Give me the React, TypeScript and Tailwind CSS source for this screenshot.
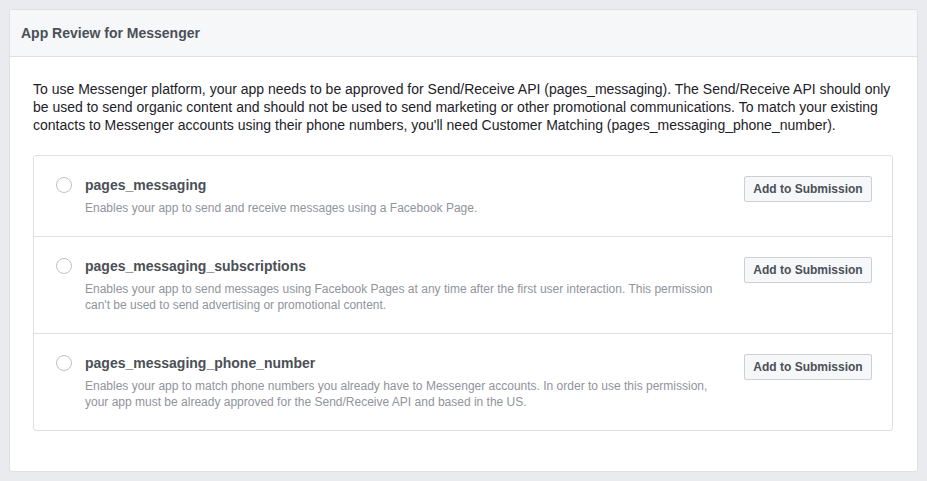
import React from 'react';

interface Permission {
  name: string;
  description: string;
}

const permissions: Permission[] = [
  {
    name: 'pages_messaging',
    description: 'Enables your app to send and receive messages using a Facebook Page.',
  },
  {
    name: 'pages_messaging_subscriptions',
    description:
      "Enables your app to send messages using Facebook Pages at any time after the first user interaction. This permission can't be used to send advertising or promotional content.",
  },
  {
    name: 'pages_messaging_phone_number',
    description:
      'Enables your app to match phone numbers you already have to Messenger accounts. In order to use this permission, your app must be already approved for the Send/Receive API and based in the US.',
  },
];

const PermissionRow: React.FC<{ item: Permission; last: boolean }> = ({ item, last }) => (
  <div className={`flex items-start pl-[22px] pr-5 pt-5 pb-5 ${last ? '' : 'border-b border-[#dddfe2]'}`}>
    {/* radio */}
    <div className="mt-px w-4 h-4 shrink-0 rounded-full border border-[#bec2c9] bg-white" />
    <div className="ml-[13px] flex-1 pr-6">
      <div className="text-[14px] leading-[18px] font-bold text-[#4b4f56]">{item.name}</div>
      <div className="mt-[6px] text-[12px] leading-4 text-[#90949c]">{item.description}</div>
    </div>
    <button className="shrink-0 h-[26px] w-[128px] rounded-[2px] border border-[#ced0d4] bg-[#f6f7f9] text-[12px] font-bold text-[#4b4f56]">
      Add to Submission
    </button>
  </div>
);

export default function App() {
  return (
    <div
      className="min-h-[481px] bg-[#e9ebee] pt-[9px] pl-[9px] pr-[9px] pb-[9px]"
      style={{ fontFamily: '"Liberation Sans", Arial, sans-serif' }}
    >
      <div className="rounded-[3px] border border-[#dddfe2] bg-white">
        <div className="h-[47px] flex items-center px-[11px] bg-[#f6f7f9] border-b border-[#dddfe2] rounded-t-[3px]">
          <h2 className="text-[14px] font-bold text-[#4b4f56]">App Review for Messenger</h2>
        </div>
        <div className="pl-[23px] pr-[24px] pt-[23px] pb-[40px]">
          <p className="text-[14px] leading-[18px] text-[#1d2129]">
            To use Messenger platform, your app needs to be approved for Send/Receive API (pages_messaging). The
            Send/Receive API should only be used to send organic content and should not be used to send marketing
            or other promotional communications. To match your existing contacts to Messenger accounts using their
            phone numbers, you'll need Customer Matching (pages_messaging_phone_number).
          </p>
          <div className="mt-[21px] rounded-[3px] border border-[#dddfe2]">
            {permissions.map((p, i) => (
              <PermissionRow key={p.name} item={p} last={i === permissions.length - 1} />
            ))}
          </div>
        </div>
      </div>
    </div>
  );
}
